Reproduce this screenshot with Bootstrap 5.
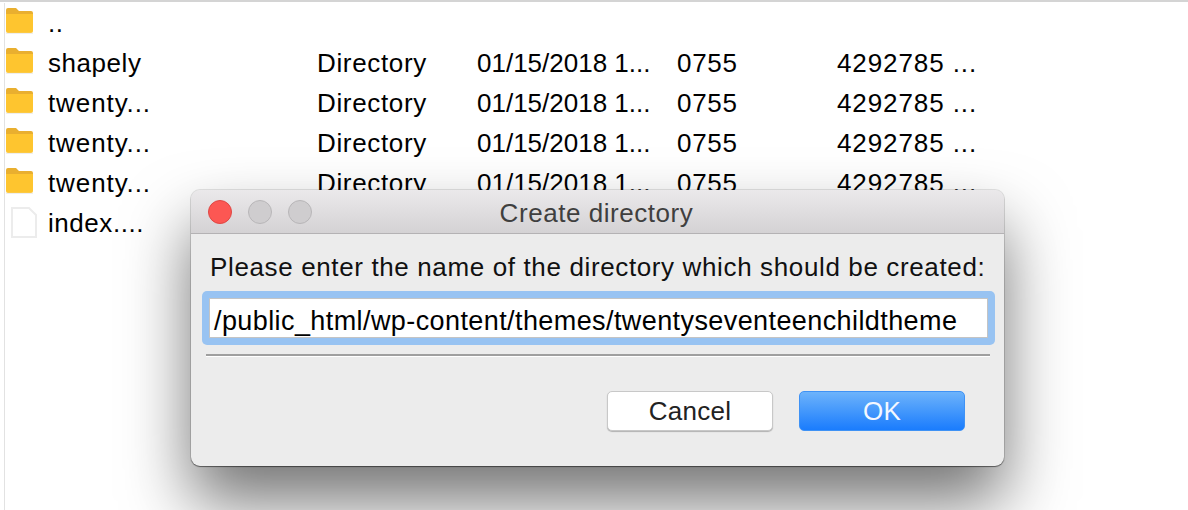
<!DOCTYPE html>
<html lang="en">
<head>
<meta charset="utf-8">
<title>Create directory</title>
<link href="https://cdn.jsdelivr.net/npm/bootstrap@5.3.0/dist/css/bootstrap.min.css" rel="stylesheet">
<style>
html,body{height:100%;margin:0;overflow:hidden;background:#fff}
body{font-family:"Liberation Sans",Arial,sans-serif;font-size:26px;letter-spacing:.55px;color:#000;position:relative}
.pane{height:510px;border-top:2px solid #d4d4d4;padding-top:1px;padding-left:4px}
.pane-in{border-left:1px solid #e2e2e2;height:100%}
.frow{height:40px;display:flex;align-items:center;line-height:40px;white-space:nowrap}
.ficon{width:43px;flex:none;display:flex;align-items:center}
.fold-ic{margin-bottom:5px}
.doc-ic{margin-left:5px;margin-bottom:1px}
.sprite{position:absolute;width:0;height:0}
.c-name{width:269px}.c-tw{letter-spacing:.9px}.c-type{width:160px;letter-spacing:.65px}.c-date{width:200px;letter-spacing:0}.c-perm{width:160px;letter-spacing:.7px}.c-own{letter-spacing:.9px}
.dlg{position:absolute;left:191px;top:190px;width:813px;height:276px;background:#ececec;border-radius:9px;box-shadow:0 0 0 1px rgba(0,0,0,.1),0 1px 1px rgba(0,0,0,.45),0 36px 66px rgba(0,0,0,.55);overflow:hidden;display:flex;flex-direction:column}
.tbar{height:44px;flex:none;background:linear-gradient(#ebe9eb,#d4d2d4);border-bottom:1px solid #b4b2b4;position:relative;display:flex;align-items:center;justify-content:center;color:#3f3f3f;padding-top:3px;padding-right:2px}
.lights{position:absolute;left:17px;top:10px;display:flex;gap:16px}
.lamp{width:24px;height:24px;border-radius:50%;background:#cfcdcf;border:1px solid #b8b6b8}
.lamp-red{background:#fc5753;border-color:#df4744}
.dbody{padding:0 10px 0 11px;flex:1;display:flex;flex-direction:column}
.prompt{height:57px;line-height:67px;padding-left:8px;white-space:nowrap;letter-spacing:.63px;color:#111}
.inwrap{height:54px;background:#98c3f2;border-radius:5px;padding:7px;width:793px}
.intext{height:40px;background:#fff;border:1px solid #c4c4c4;line-height:44px;padding-left:4px;color:#000;white-space:nowrap;font-size:27px;letter-spacing:.41px}
.sep{height:2px;background:#9f9f9f;margin:9px 0 0 4px;box-shadow:0 1px 0 #fff;width:784px}
.btns{display:flex;justify-content:flex-end;gap:26px;margin-top:35px;padding-right:29px}
.mbtn{width:166px;height:40px;border-radius:5px;padding:0;font-size:26px;line-height:38px;letter-spacing:.3px}
.mbtn-c,.mbtn-c:hover{background:#fff;color:#222;border:1px solid #c8c8c8;box-shadow:0 1px 1px rgba(0,0,0,.25)}
.mbtn-o,.mbtn-o:hover{background:linear-gradient(#6db3fb,#1a7cfd);color:#f4f8ff;border:1px solid #3f92f5}
</style>
</head>
<body>
<svg class="sprite" width="0" height="0">
<defs>
<symbol id="fold" viewBox="0 0 29 27"><path d="M1 6V3a2 2 0 0 1 2-2h8l3 3h12a2 2 0 0 1 2 2v2H1z" fill="#e9af2f"/><path d="M1 7h27v17a2 2 0 0 1-2 2H3a2 2 0 0 1-2-2z" fill="#fec52f"/><path d="M1 26.4h27" stroke="#ececec" stroke-width="1"/></symbol>
<symbol id="doc" viewBox="0 0 27 32"><path d="M2 1h17l7 7v22H2z" fill="#fff" stroke="#ececec" stroke-width="2"/></symbol>
</defs>
</svg>
<div class="pane"><div class="pane-in">
  <div class="frow"><span class="ficon"><svg class="fold-ic" width="29" height="27"><use href="#fold"/></svg></span><span class="c-name">..</span></div>
  <div class="frow"><span class="ficon"><svg class="fold-ic" width="29" height="27"><use href="#fold"/></svg></span><span class="c-name">shapely</span><span class="c-type">Directory</span><span class="c-date">01/15/2018 1...</span><span class="c-perm">0755</span><span class="c-own">4292785 ...</span></div>
  <div class="frow"><span class="ficon"><svg class="fold-ic" width="29" height="27"><use href="#fold"/></svg></span><span class="c-name c-tw">twenty...</span><span class="c-type">Directory</span><span class="c-date">01/15/2018 1...</span><span class="c-perm">0755</span><span class="c-own">4292785 ...</span></div>
  <div class="frow"><span class="ficon"><svg class="fold-ic" width="29" height="27"><use href="#fold"/></svg></span><span class="c-name c-tw">twenty...</span><span class="c-type">Directory</span><span class="c-date">01/15/2018 1...</span><span class="c-perm">0755</span><span class="c-own">4292785 ...</span></div>
  <div class="frow"><span class="ficon"><svg class="fold-ic" width="29" height="27"><use href="#fold"/></svg></span><span class="c-name c-tw">twenty...</span><span class="c-type">Directory</span><span class="c-date">01/15/2018 1...</span><span class="c-perm">0755</span><span class="c-own">4292785 ...</span></div>
  <div class="frow"><span class="ficon"><svg width="27" height="32" class="doc-ic"><use href="#doc"/></svg></span><span class="c-name">index....</span></div>
</div></div>
<div class="dlg" role="dialog">
  <div class="tbar"><div class="lights"><span class="lamp lamp-red"></span><span class="lamp"></span><span class="lamp"></span></div><span>Create directory</span></div>
  <div class="dbody">
    <div class="prompt">Please enter the name of the directory which should be created:</div>
    <div class="inwrap"><div class="intext">/public_html/wp-content/themes/twentyseventeenchildtheme</div></div>
    <div class="sep"></div>
    <div class="btns"><button class="btn mbtn mbtn-c">Cancel</button><button class="btn mbtn mbtn-o">OK</button></div>
  </div>
</div>
<script src="https://cdn.jsdelivr.net/npm/bootstrap@5.3.0/dist/js/bootstrap.bundle.min.js"></script>
</body>
</html>
